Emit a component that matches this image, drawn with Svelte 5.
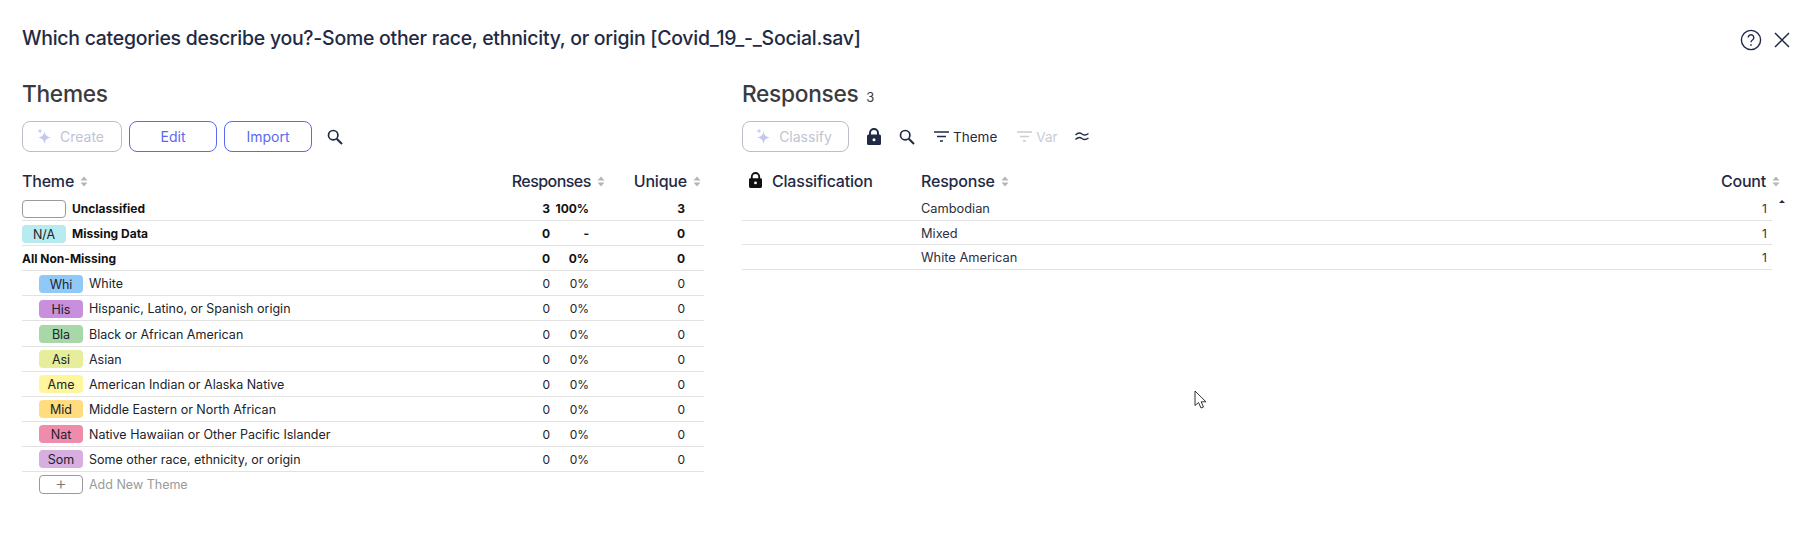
<script>
	const themes = [
		{ tag: 'Whi', name: 'White', color: '#90c8f8' },
		{ tag: 'His', name: 'Hispanic, Latino, or Spanish origin', color: '#c890dc' },
		{ tag: 'Bla', name: 'Black or African American', color: '#a8d8a8' },
		{ tag: 'Asi', name: 'Asian', color: '#e6ee9c' },
		{ tag: 'Ame', name: 'American Indian or Alaska Native', color: '#fff59d' },
		{ tag: 'Mid', name: 'Middle Eastern or North African', color: '#ffdd7f' },
		{ tag: 'Nat', name: 'Native Hawaiian or Other Pacific Islander', color: '#ef8bab' },
		{ tag: 'Som', name: 'Some other race, ethnicity, or origin', color: '#d6aee0' }
	];

	const responses = ['Cambodian', 'Mixed', 'White American'];
</script>

{#snippet sort()}
	<svg class="sort" width="8" height="11" viewBox="0 0 8 11">
		<path d="M4 0.5 L7.5 4.5 H0.5 Z M4 10.5 L0.5 6.5 H7.5 Z" fill="#b5b5b5" />
	</svg>
{/snippet}

{#snippet sparkle()}
	<svg width="16" height="17" viewBox="0 0 16 17">
		<path d="M7.5 3 C8 7 10 9 14 9.5 C10 10 8 12 7.5 16 C7 12 5 10 1 9.5 C5 9 7 7 7.5 3 Z" fill="#c3c8f0" />
		<path d="M3 0.5 L3.7 2.3 L5.5 3 L3.7 3.7 L3 5.5 L2.3 3.7 L0.5 3 L2.3 2.3 Z" fill="#c3c8f0" />
	</svg>
{/snippet}

{#snippet search(color)}
	<svg width="16" height="16" viewBox="0 0 16 16" fill="none" stroke={color} stroke-width="1.7">
		<circle cx="6.2" cy="6.2" r="4.7" />
		<path d="M9.7 9.7 L15 15" stroke-width="2" />
	</svg>
{/snippet}

{#snippet lock(w, h, color)}
	<svg width={w} height={h} viewBox="0 0 14 17">
		<path
			d="M2 6.5 V5 a5 5 0 0 1 10 0 V6.5 h0.5 a1.5 1.5 0 0 1 1.5 1.5 V15.5 a1.5 1.5 0 0 1 -1.5 1.5 H1.5 A1.5 1.5 0 0 1 0 15.5 V8 A1.5 1.5 0 0 1 1.5 6.5 Z M4 6.5 H10 V5 a3 3 0 0 0 -6 0 Z"
			fill={color}
			fill-rule="evenodd"
		/>
		<circle cx="7" cy="11.7" r="1.5" fill="#fff" />
	</svg>
{/snippet}

{#snippet filter(color)}
	<svg width="15" height="11" viewBox="0 0 15 11" fill="none" stroke={color} stroke-width="1.6">
		<path d="M0 1 H15 M3 5.5 H12 M6 10 H9" />
	</svg>
{/snippet}

<div class="page">
	<header class="top">
		<h1>Which categories describe you?-Some other race, ethnicity, or origin [Covid_19_-_Social.sav]</h1>
		<div class="top-icons">
			<svg width="22" height="22" viewBox="0 0 22 22" fill="none" stroke="#1f2a44" stroke-width="1.4">
				<circle cx="11" cy="11" r="9.6" />
				<path d="M8.2 8.6 a2.8 2.8 0 1 1 4.3 2.4 c-1 .6 -1.5 1.2 -1.5 2.3" />
				<circle cx="11" cy="16" r="0.6" fill="#1f2a44" stroke-width="0.6" />
			</svg>
			<svg width="16" height="16" viewBox="0 0 16 16" fill="none" stroke="#1f2a44" stroke-width="1.5">
				<path d="M1 1 L15 15 M15 1 L1 15" />
			</svg>
		</div>
	</header>

	<div class="columns">
		<section class="themes">
			<h2>Themes</h2>
			<div class="toolbar">
				<button class="btn ai ai-create">{@render sparkle()}<span>Create</span></button>
				<button class="btn">Edit</button>
				<button class="btn">Import</button>
				<span class="tool-search">{@render search('#1f2a44')}</span>
			</div>

			<div class="thead">
				<span class="th grow">Theme {@render sort()}</span>
				<span class="th th-resp">Responses {@render sort()}</span>
				<span class="th unique">Unique {@render sort()}</span>
			</div>

			<div class="row strong">
				<div class="name"><span class="tag empty"></span>Unclassified</div>
				<span class="num">3</span>
				<span class="num">100%</span>
				<span class="num">3</span>
			</div>
			<div class="row strong">
				<div class="name"><span class="tag" style="background: #b8ebf0">N/A</span>Missing Data</div>
				<span class="num">0</span>
				<span class="num">-</span>
				<span class="num">0</span>
			</div>
			<div class="row strong">
				<div class="name">All Non-Missing</div>
				<span class="num">0</span>
				<span class="num">0%</span>
				<span class="num">0</span>
			</div>
			{#each themes as t}
				<div class="row">
					<div class="name indent">
						<span class="tag" style="background: {t.color}">{t.tag}</span>{t.name}
					</div>
					<span class="num">0</span>
					<span class="num">0%</span>
					<span class="num">0</span>
				</div>
			{/each}
			<div class="add">
				<span class="add-box">+</span>
				Add New Theme
			</div>
		</section>

		<section class="responses">
			<h2>Responses <small>3</small></h2>
			<div class="toolbar tools-r">
				<button class="btn ai ai-classify">{@render sparkle()}<span>Classify</span></button>
				<span class="t-lock">{@render lock(14, 17, '#1f2a44')}</span>
				<span class="t-search">{@render search('#1f2a44')}</span>
				<span class="t-filter">{@render filter('#1f2a44')}Theme</span>
				<span class="t-filter off">{@render filter('#c9ccd3')}Var</span>
				<svg class="approx" width="14" height="9" viewBox="0 0 14 9" fill="none" stroke="#1f2a44" stroke-width="1.3">
					<path d="M0.5 3 C3 0.5 5 0.5 7 2 S11 3.5 13.5 1.5 M0.5 7.5 C3 5 5 5 7 6.5 S11 8 13.5 6" />
				</svg>
			</div>

			<div class="thead r-head">
				<span class="th r-class">{@render lock(13, 16, '#111')}Classification</span>
				<span class="th grow">Response {@render sort()}</span>
				<span class="th r-count">Count {@render sort()}</span>
			</div>

			<div class="r-body">
				{#each responses as r}
					<div class="r-row">
						<span class="r-text">{r}</span>
						<span class="r-num">1</span>
					</div>
				{/each}
				<span class="scroll-up"></span>
			</div>
		</section>
	</div>

	<svg class="cursor" width="14" height="20" viewBox="0 0 14 20">
		<path d="M1 1 V15.5 L4.5 12.5 L7 18 L9.5 17 L7.2 11.8 H12 Z" fill="#fff" stroke="#333" stroke-width="1" />
	</svg>
</div>

<style>
	:global(body) {
		margin: 0;
		background: #fff;
	}

	.page {
		position: relative;
		height: 542px;
		box-sizing: border-box;
		padding: 24px 0 0 22px;
		font-family: Inter, 'Liberation Sans', sans-serif;
		color: #1f2a44;
		overflow: hidden;
	}

	.top {
		display: flex;
		justify-content: space-between;
		height: 28px;
		padding-right: 26px;
	}

	h1 {
		margin: 0;
		font-family: Inter, sans-serif;
		font-size: 19.45px;
		font-weight: 500;
		letter-spacing: -0.25px;
		line-height: 28px;
		color: #1f2a44;
	}

	.top-icons {
		display: flex;
		align-items: center;
		gap: 12px;
		margin-top: 5px;
		height: 22px;
	}

	.columns {
		display: flex;
		gap: 38px;
		margin-top: 27px;
	}

	.themes {
		width: 682px;
		flex: none;
	}

	.responses {
		width: 1030px;
		flex: none;
		position: relative;
	}

	h2 {
		margin: 0;
		font-family: Inter, sans-serif;
		font-size: 22.7px;
		font-weight: 500;
		letter-spacing: -0.3px;
		line-height: 30px;
		height: 30px;
		color: #3b3b3f;
	}

	h2 small {
		font-size: 13px;
		font-weight: 400;
		margin-left: 2px;
		line-height: 1;
	}

	.toolbar {
		display: flex;
		align-items: center;
		gap: 7px;
		height: 31px;
		margin-top: 12px;
	}

	.btn {
		display: flex;
		align-items: center;
		justify-content: center;
		box-sizing: border-box;
		width: 88px;
		height: 31px;
		padding: 0;
		background: #fff;
		border: 1px solid #5b68f0;
		border-radius: 8px;
		color: #5b68f0;
		font-family: Inter, sans-serif;
		font-size: 14px;
	}

	.ai {
		gap: 7px;
		padding-right: 3px;
		border-color: #b9bdcc;
		color: #c0c4d4;
	}

	.ai-create {
		width: 100px;
	}

	.ai-classify {
		width: 107px;
	}

	.tool-search {
		display: flex;
		margin-left: 8px;
	}

	.tools-r {
		gap: 0;
	}

	.t-lock {
		display: flex;
		margin-left: 18px;
	}

	.t-search {
		display: flex;
		margin-left: 18px;
	}

	.t-filter {
		display: flex;
		align-items: center;
		gap: 4px;
		margin-left: 19px;
		font-size: 13.5px;
		color: #1f2a44;
	}

	.t-filter.off {
		margin-left: 20px;
		color: #c9ccd3;
	}

	.approx {
		margin-left: 17px;
	}

	.thead {
		display: flex;
		align-items: center;
		justify-content: flex-end;
		gap: 29px;
		box-sizing: border-box;
		height: 27px;
		margin-top: 17px;
		padding: 0 3px 3px 0;
	}

	.th {
		display: flex;
		align-items: center;
		gap: 6px;
		font-size: 16px;
		font-weight: 500;
		letter-spacing: -0.2px;
		white-space: nowrap;
	}

	.th-resp {
		letter-spacing: -0.55px;
	}

	.grow {
		flex: 1;
	}

	.row {
		display: grid;
		grid-template-columns: 1fr 30px 39px 96px;
		align-items: center;
		box-sizing: border-box;
		height: 25.1px;
		padding: 1px 19px 0 0;
		border-bottom: 1px solid #e2e2e2;
		font-size: 12.5px;
		color: #20232c;
	}

	.strong {
		font-size: 12px;
		font-weight: 700;
		color: #111;
	}

	.name {
		display: flex;
		align-items: center;
		gap: 6px;
		white-space: nowrap;
	}

	.indent {
		padding-left: 17px;
	}

	.tag {
		box-sizing: border-box;
		width: 44px;
		height: 18px;
		border-radius: 4px;
		font-size: 12.5px;
		font-weight: 400;
		line-height: 19px;
		text-align: center;
		color: #20232c;
	}

	.tag.empty {
		border: 1px solid #9a9a9a;
	}

	.num {
		font-size: 12px;
		text-align: right;
	}

	.add {
		display: flex;
		align-items: center;
		gap: 6px;
		margin-top: 3px;
		padding-left: 17px;
		font-size: 12.5px;
		color: #9a9a9a;
	}

	.add-box {
		box-sizing: border-box;
		width: 44px;
		height: 19px;
		border: 1px solid #9a9a9a;
		border-radius: 4px;
		font-size: 18px;
		font-weight: 300;
		line-height: 16px;
		text-align: center;
		color: #777;
	}

	.r-head {
		gap: 0;
		padding-right: 0;
	}

	.r-class {
		width: 179px;
		box-sizing: border-box;
		padding-left: 7px;
		gap: 10px;
	}

	.r-class svg {
		margin-top: -3px;
	}

	.r-count {
		width: 60px;
		justify-content: flex-end;
		margin-right: -8px;
	}

	.r-body {
		position: relative;
		width: 1030px;
	}

	.r-row {
		display: flex;
		justify-content: space-between;
		align-items: center;
		box-sizing: border-box;
		height: 24.6px;
		padding: 2px 5px 0 179px;
		border-bottom: 1px solid #e2e2e2;
		font-size: 12.8px;
		color: #2a3040;
	}

	.r-num {
		font-size: 12px;
	}

	.scroll-up {
		position: absolute;
		top: 4px;
		right: -13px;
		border-left: 3px solid transparent;
		border-right: 3px solid transparent;
		border-bottom: 3px solid #1f2a44;
	}

	.cursor {
		position: absolute;
		left: 1194px;
		top: 390px;
	}
</style>
